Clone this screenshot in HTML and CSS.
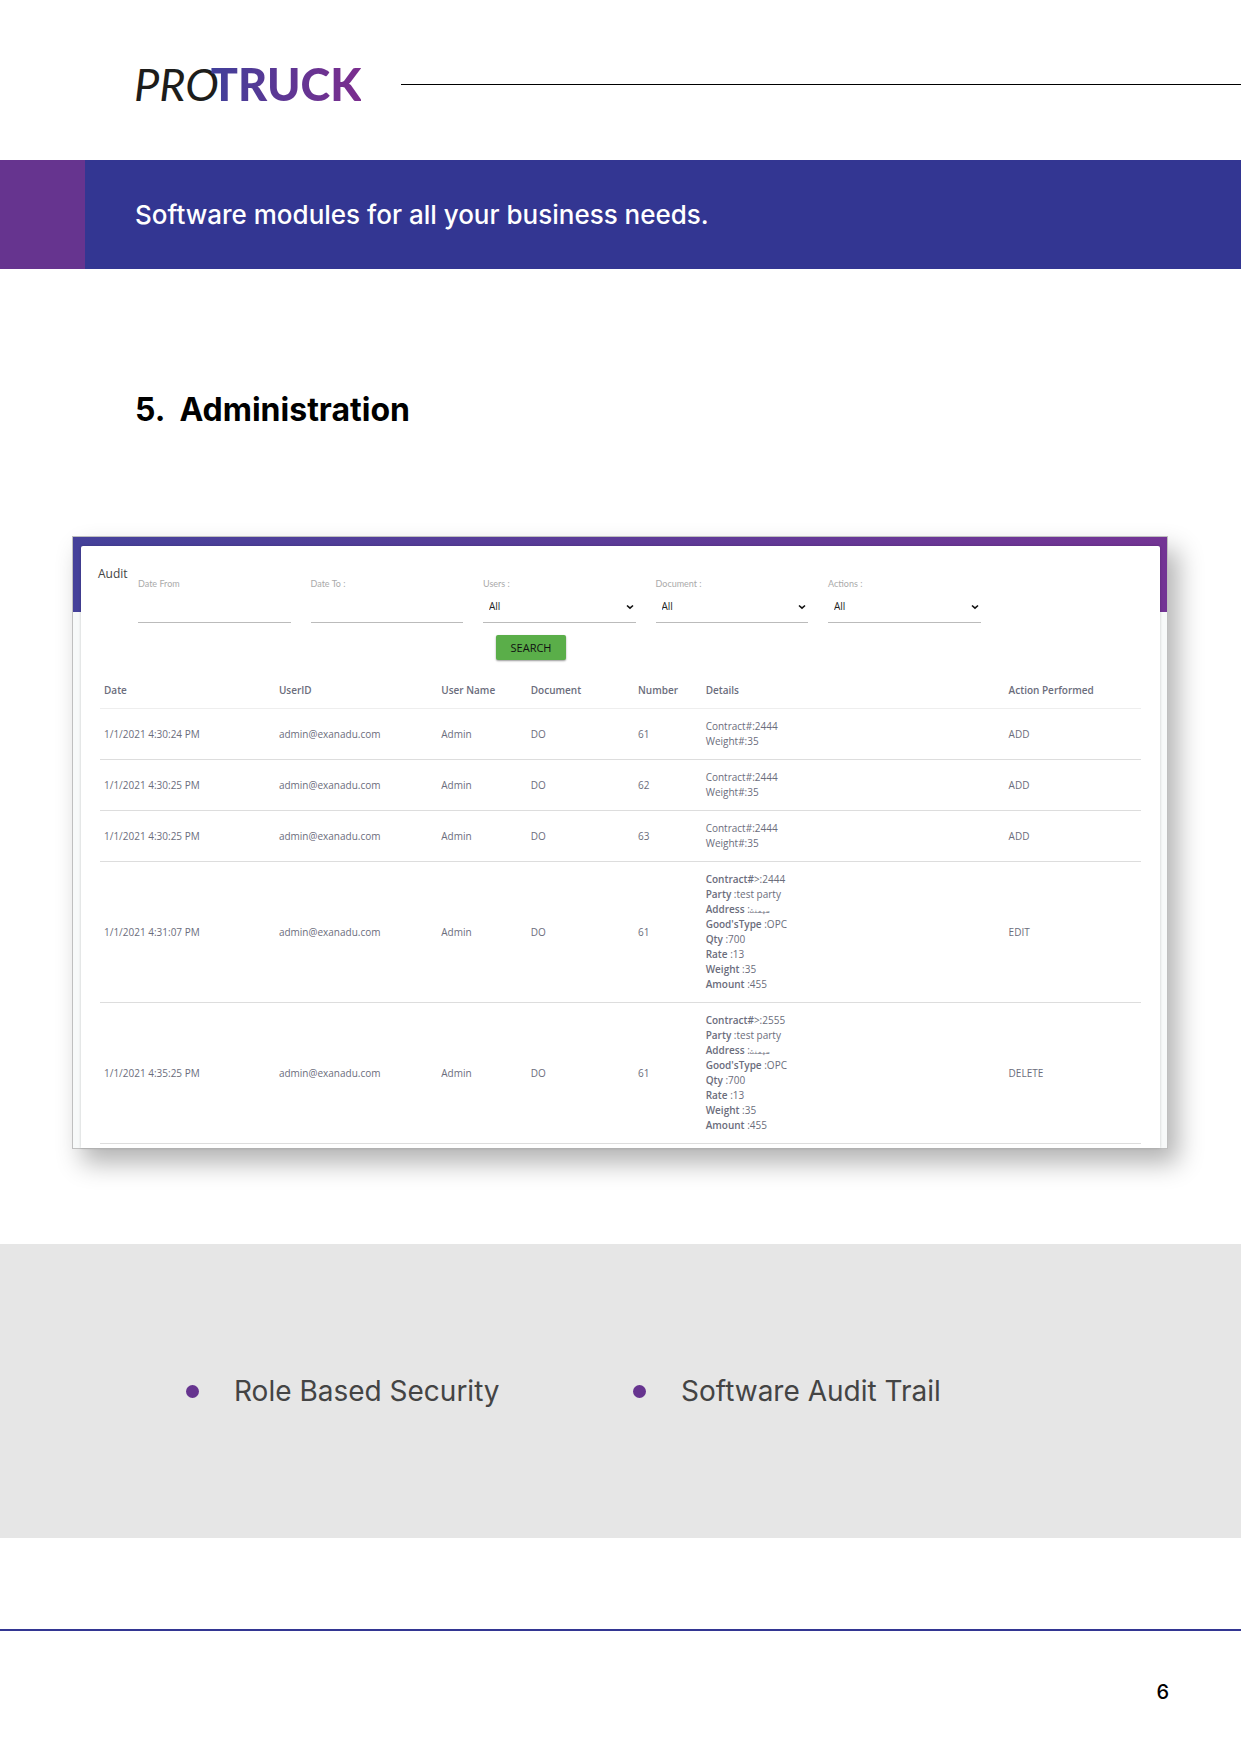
FILE: index.html
```html
<!DOCTYPE html>
<html lang="en">
<head>
    <meta charset="UTF-8">
    <meta name="viewport" content="width=device-width, initial-scale=1.0">
    <title>ProTruck - Administration</title>
    <link rel="stylesheet" href="styles.css">
</head>
<body>
    <header class="header">
        <div class="logo"><span class="logo-pro">PRO</span><span class="logo-truck">TRUCK</span></div>
        <div class="header-line"></div>
    </header>

    <div class="banner">
        <p>Software modules for all your business needs.</p>
    </div>

    <main>
        <h1><span>5.</span><span>Administration</span></h1>

        <section class="screen">
            <div class="card">
                <div class="filters">
                    <h2>Audit</h2>
                    <form class="filter-form">
                        <div class="field">
                            <label for="date-from">Date From</label>
                            <input type="text" id="date-from">
                        </div>
                        <div class="field">
                            <label for="date-to">Date To :</label>
                            <input type="text" id="date-to">
                        </div>
                        <div class="field">
                            <label for="users">Users :</label>
                            <div class="select">
                                <select id="users"><option>All</option></select>
                                <svg viewBox="0 0 8 6"><path d="M1 1.5 4 4.2 7 1.5"/></svg>
                            </div>
                        </div>
                        <div class="field">
                            <label for="document">Document :</label>
                            <div class="select">
                                <select id="document"><option>All</option></select>
                                <svg viewBox="0 0 8 6"><path d="M1 1.5 4 4.2 7 1.5"/></svg>
                            </div>
                        </div>
                        <div class="field">
                            <label for="actions">Actions :</label>
                            <div class="select">
                                <select id="actions"><option>All</option></select>
                                <svg viewBox="0 0 8 6"><path d="M1 1.5 4 4.2 7 1.5"/></svg>
                            </div>
                        </div>
                        <button type="button" class="search-btn">SEARCH</button>
                    </form>
                </div>

                <table class="audit">
                    <colgroup>
                        <col class="col-date">
                        <col class="col-userid">
                        <col class="col-name">
                        <col class="col-document">
                        <col class="col-number">
                        <col class="col-details">
                        <col class="col-action">
                    </colgroup>
                    <thead>
                        <tr>
                            <th>Date</th>
                            <th>UserID</th>
                            <th>User Name</th>
                            <th>Document</th>
                            <th>Number</th>
                            <th>Details</th>
                            <th>Action Performed</th>
                        </tr>
                    </thead>
                    <tbody>
                        <tr>
                            <td>1/1/2021 4:30:24 PM</td>
                            <td>admin@exanadu.com</td>
                            <td>Admin</td>
                            <td>DO</td>
                            <td>61</td>
                            <td>Contract#:2444<br>Weight#:35</td>
                            <td>ADD</td>
                        </tr>
                        <tr>
                            <td>1/1/2021 4:30:25 PM</td>
                            <td>admin@exanadu.com</td>
                            <td>Admin</td>
                            <td>DO</td>
                            <td>62</td>
                            <td>Contract#:2444<br>Weight#:35</td>
                            <td>ADD</td>
                        </tr>
                        <tr>
                            <td>1/1/2021 4:30:25 PM</td>
                            <td>admin@exanadu.com</td>
                            <td>Admin</td>
                            <td>DO</td>
                            <td>63</td>
                            <td>Contract#:2444<br>Weight#:35</td>
                            <td>ADD</td>
                        </tr>
                        <tr>
                            <td>1/1/2021 4:31:07 PM</td>
                            <td>admin@exanadu.com</td>
                            <td>Admin</td>
                            <td>DO</td>
                            <td>61</td>
                            <td>
                                <b>Contract#</b>&gt;:2444<br>
                                <b>Party</b> :test party<br>
                                <b>Address</b> :<span class="urdu" lang="ur">سیمنٹ</span><br>
                                <b>Good'sType</b> :OPC<br>
                                <b>Qty</b> :700<br>
                                <b>Rate</b> :13<br>
                                <b>Weight</b> :35<br>
                                <b>Amount</b> :455
                            </td>
                            <td>EDIT</td>
                        </tr>
                        <tr>
                            <td>1/1/2021 4:35:25 PM</td>
                            <td>admin@exanadu.com</td>
                            <td>Admin</td>
                            <td>DO</td>
                            <td>61</td>
                            <td>
                                <b>Contract#</b>&gt;:2555<br>
                                <b>Party</b> :test party<br>
                                <b>Address</b> :<span class="urdu" lang="ur">سیمنٹ</span><br>
                                <b>Good'sType</b> :OPC<br>
                                <b>Qty</b> :700<br>
                                <b>Rate</b> :13<br>
                                <b>Weight</b> :35<br>
                                <b>Amount</b> :455
                            </td>
                            <td>DELETE</td>
                        </tr>
                    </tbody>
                </table>
            </div>
        </section>

        <section class="features">
            <ul>
                <li>Role Based Security</li>
                <li>Software Audit Trail</li>
            </ul>
        </section>
    </main>

    <footer class="footer">
        <p>6</p>
    </footer>
</body>
</html>
```
FILE: styles.css
```css
* {
    margin: 0;
    padding: 0;
    box-sizing: border-box;
}

body {
    background-color: #fff;
    color: #000;
    font-family: Inter, "Liberation Sans", sans-serif;
}

.header {
    display: flex;
    align-items: center;
    gap: 40px;
    height: 160px;
    padding: 8px 0 0 134px;
}

.logo {
    font-family: Lato, sans-serif;
    font-size: 45px;
    line-height: 60px;
    white-space: nowrap;
}

.logo-pro {
    font-style: italic;
    font-weight: 400;
    color: #1d1d1b;
}

/* the T tucks in against the O */
.logo-truck {
    margin-left: -8px;
    font-weight: 900;
    color: transparent;
    background: linear-gradient(90deg, #41409a, #7b2d8e);
    -webkit-background-clip: text;
    background-clip: text;
}

.header-line {
    flex: 1;
    border-top: 1px solid #000;
}

/* banner */
.banner {
    display: flex;
    align-items: center;
    height: 109px;
    padding-left: 50px;
    border-left: 85px solid #66348f;
    background-color: #333692;
    color: #fff;
    font-size: 26px;
    font-weight: 500;
}

h1 {
    display: flex;
    gap: 14px;
    margin: 120px 135px 105px;
    font-size: 32px;
    line-height: 42px;
}

/* audit screen */
.screen {
    margin: 0 73px 0 72px;
    padding: 9px 7px 0 8px;
    border: 1px solid #bfbfbf;
    background: linear-gradient(90deg, #45419a, #733494) 0 0 / 100% 75px no-repeat #f7f9f9;
    box-shadow: 10px 14px 24px rgba(0, 0, 0, 0.3);
    color: #6b6d7c;
    font-family: "Open Sans", sans-serif;
    font-size: 10px;
    line-height: 15px;
}

.card {
    padding: 17px 19px 4px;
    border-radius: 2px 2px 0 0;
    background-color: #fff;
    box-shadow: 0 0 3px rgba(0, 0, 0, 0.2);
}

.filters {
    display: flex;
    margin: 0 -12px 0 -2px;
}

h2 {
    width: 40px;
    color: #444;
    font-size: 12px;
    font-weight: 400;
    line-height: 22px;
}

.filter-form {
    flex: 1;
    display: grid;
    grid-template-columns: repeat(6, 1fr);
    gap: 12px 20px;
    padding-top: 15px;
}

.field label {
    display: block;
    color: #aaa;
    font-family: Lato, sans-serif;
    font-size: 9px;
    line-height: 12px;
}

.field input,
.field select {
    display: block;
    width: 100%;
    height: 33px;
    border: none;
    border-bottom: 1px solid #bbb;
    border-radius: 0;
    background: none;
    color: #222;
    font: inherit;
}

.field select {
    appearance: none;
    padding: 0 6px;
}

.select {
    position: relative;
}

.select svg {
    position: absolute;
    top: 14px;
    right: 2px;
    width: 8px;
    height: 6px;
    fill: none;
    stroke: #111;
    stroke-width: 1.6;
    pointer-events: none;
}

.search-btn {
    grid-column: 3;
    width: 70px;
    height: 25px;
    margin-left: 13px;
    border: none;
    border-radius: 2px;
    background-color: #5aae49;
    box-shadow: 0 1px 2px rgba(0, 0, 0, 0.4);
    color: #111;
    font: inherit;
    font-size: 11px;
    cursor: pointer;
}

.audit {
    width: 100%;
    margin-top: 13px;
    border-collapse: collapse;
    table-layout: fixed;
    text-align: left;
}

.audit th,
.audit td {
    padding: 10px 4px;
    border-bottom: 1px solid #ddd;
}

.audit th {
    border-color: #eee;
    font-weight: 600;
}

.audit b {
    font-weight: 600;
}

.col-date { width: 16.8%; }
.col-userid { width: 15.6%; }
.col-name { width: 8.6%; }
.col-document { width: 10.3%; }
.col-number { width: 6.5%; }
.col-details { width: 29.1%; }
.col-action { width: 13.1%; }

.urdu {
    font-size: 6px;
    line-height: 1;
}

/* features */
.features {
    margin-top: 95px;
    padding: 127px 136px;
    background-color: #e6e6e6;
}

.features ul {
    display: grid;
    grid-template-columns: 447px 1fr;
    padding-left: 50px;
    list-style: none;
}

.features li {
    display: flex;
    align-items: center;
    gap: 35px;
    color: #444;
    font-size: 28px;
    line-height: 40px;
}

.features li::before {
    content: "";
    width: 13px;
    height: 13px;
    border-radius: 50%;
    background-color: #66348f;
}

.footer {
    margin-top: 91px;
    padding: 48px 72px;
    border-top: 2px solid #333692;
    font-size: 20px;
    font-weight: 500;
    line-height: 26px;
    text-align: right;
}
```
